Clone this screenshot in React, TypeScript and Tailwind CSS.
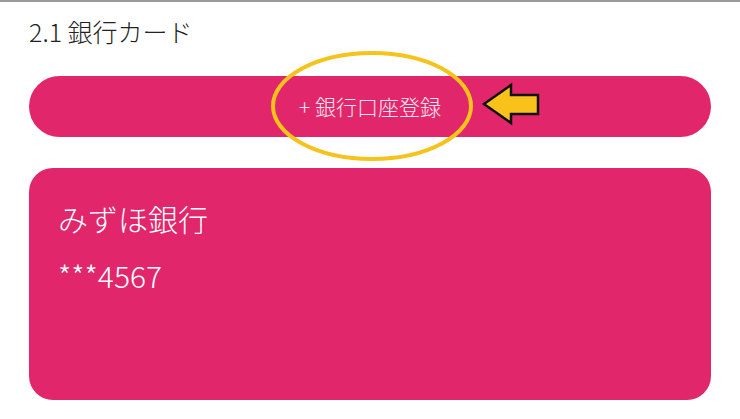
import React from "react";

const font = { fontFamily: '"Noto Sans CJK JP", "Noto Sans", sans-serif' };

// yellow hand-drawn highlight over the register button
const Highlight = () => (
  <svg className="absolute left-0 top-0 pointer-events-none" width="740" height="419" viewBox="0 0 740 419">
    <ellipse cx="372" cy="104" rx="99" ry="53" fill="none" stroke="#f6c21c" strokeWidth="4" />
    <path
      d="M484 102 L511 83 L511 93 L538 93 L538 112 L511 112 L511 121 Z"
      fill="#f8c21a"
      stroke="#111"
      strokeWidth="2.5"
      strokeLinejoin="miter"
    />
  </svg>
);

export default function App() {
  return (
    <div className="relative w-[740px] h-[419px] bg-white overflow-hidden border-t-2 border-[#9a9a9a]" style={font}>
      <div className="px-[29px] pt-[12px]">
        <h2 className="text-[25px] leading-[34px] font-light text-[#222]">2.1 銀行カード</h2>
        <button className="mt-[28px] w-full h-[61px] rounded-full bg-[#e1266b] text-[21px] font-light text-[#fbe6ef] flex items-center justify-center">
          + 銀行口座登録
        </button>
        <div className="mt-[31px] h-[232px] rounded-[24px] bg-[#e1266b] px-[29px] pt-[31px] text-white font-light">
          <div className="text-[30px] leading-[38px]">みずほ銀行</div>
          <div className="mt-[20px] text-[30px] leading-[36px]">***4567</div>
        </div>
      </div>
      <Highlight />
    </div>
  );
}
